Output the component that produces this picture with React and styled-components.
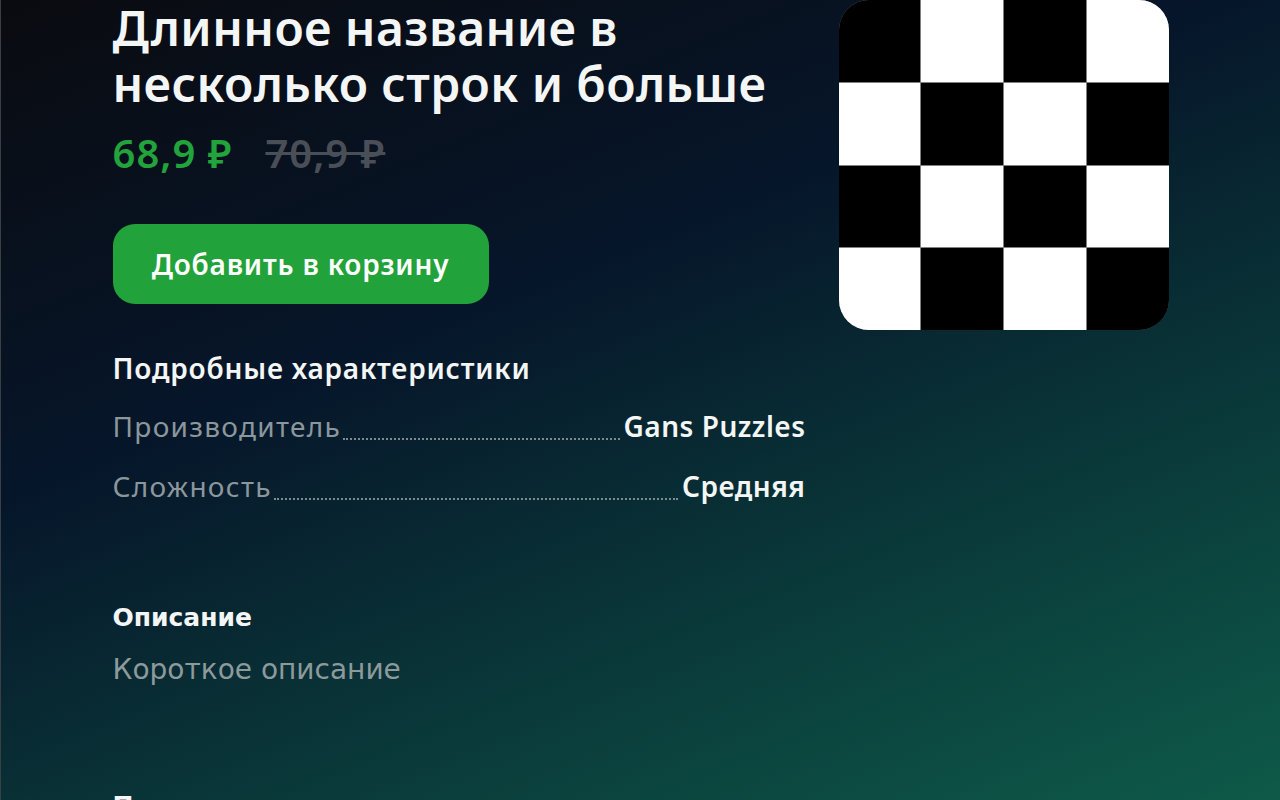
import React from "react";
import styled, { createGlobalStyle } from "styled-components";

const GlobalStyle = createGlobalStyle`
  html, body {
    margin: 0;
    padding: 0;
  }
  body {
    font-family: "Noto Sans", "Open Sans", sans-serif;
    background: #0a0b10;
  }
`;

export const Page = styled.div`
  height: 800px;
  overflow: hidden;
  border-left: 1px solid #3a3f45;
  box-sizing: border-box;
  background: linear-gradient(158deg, #0a0b10 0%, #06162a 38%, #0a3a3a 70%, #0e5a49 100%);
  color: #f4f6f6;
`;

export const Container = styled.main`
  width: 1056px;
  margin: 0 auto;
  display: grid;
  grid-template-columns: 693px 330px;
  column-gap: 33px;
  align-items: start;
`;

export const Info = styled.section`
  display: flex;
  flex-direction: column;
`;

export const Title = styled.h1`
  margin: 0;
  font-size: 48px;
  line-height: 56px;
  letter-spacing: 0.4px;
  font-weight: 600;
  color: #f4f6f6;
`;

export const PriceRow = styled.div`
  display: flex;
  align-items: center;
  gap: 33px;
  margin-top: 12px;
  height: 56px;
`;

export const Price = styled.span`
  font-size: 40px;
  letter-spacing: 1px;
  font-weight: 600;
  color: ${(props) => (props.old ? "#4a4e56" : "#22a33c")};
  text-decoration: ${(props) => (props.old ? "line-through" : "none")};
  text-decoration-thickness: 3px;
`;

export const CartButton = styled.button`
  margin-top: 44px;
  width: 376px;
  height: 80px;
  border: none;
  border-radius: 22px;
  background: #22a23a;
  color: #fff;
  font-family: "Noto Sans", sans-serif;
  font-size: 28px;
  letter-spacing: 0.8px;
  font-weight: 600;
  cursor: pointer;
`;

export const SectionTitle = styled.h2`
  margin: ${(props) => props.gap || "48px"} 0 0;
  font-size: 28px;
  letter-spacing: 0.8px;
  line-height: 36px;
  font-weight: 600;
  color: #f4f6f6;
`;

export const SpecList = styled.dl`
  margin: 22px 0 0;
  display: flex;
  flex-direction: column;
  gap: 24px;
`;

export const SpecRow = styled.div`
  display: flex;
  align-items: baseline;
  font-size: 28px;
  line-height: 36px;
`;

export const SpecName = styled.dt`
  color: #8b979c;
  letter-spacing: 1.3px;
`;

export const Leader = styled.span`
  flex: 1;
  margin: 0 4px 0 2px;
  border-bottom: 2px dotted #7d8a90;
  transform: translateY(3px);
`;

export const SpecValue = styled.dd`
  margin: 0;
  font-weight: 600;
  letter-spacing: 0.5px;
  color: #f4f6f6;
`;

export const Description = styled.p`
  margin: 16px 0 0;
  font-family: "DejaVu Sans", sans-serif;
  font-size: 28px;
  line-height: 36px;
  color: #8c9a9c;
`;

export const DescTitle = styled(SectionTitle)`
  font-family: "DejaVu Sans", sans-serif;
  font-size: 25px;
  letter-spacing: 0;
  font-weight: 700;
`;

export const Cover = styled.div`
  width: 330px;
  height: 330px;
  border-radius: 30px;
  overflow: hidden;
  display: grid;
  grid-template-columns: repeat(4, 1fr);
  grid-template-rows: repeat(4, 1fr);
  gap: 1px;
  background: #808080;
`;

export const Cell = styled.div`
  background: ${(props) => (props.dark ? "#000" : "#fff")};
`;

function Chessboard() {
  const cells = [];
  for (let r = 0; r < 4; r++) {
    for (let c = 0; c < 4; c++) {
      cells.push(<Cell key={`${r}-${c}`} dark={(r + c) % 2 === 0} />);
    }
  }
  return <Cover>{cells}</Cover>;
}

const specs = [
  { name: "Производитель", value: "Gans Puzzles" },
  { name: "Сложность", value: "Средняя" },
];

export default function App() {
  return (
    <>
      <GlobalStyle />
      <Page>
        <Container>
          <Info>
            <Title>
              Длинное название в<br />
              несколько строк и больше
            </Title>
            <PriceRow>
              <Price>68,9 ₽</Price>
              <Price old>70,9 ₽</Price>
            </PriceRow>
            <CartButton>Добавить в корзину</CartButton>
            <SectionTitle gap="46px">Подробные характеристики</SectionTitle>
            <SpecList>
              {specs.map((spec) => (
                <SpecRow key={spec.name}>
                  <SpecName>{spec.name}</SpecName>
                  <Leader />
                  <SpecValue>{spec.value}</SpecValue>
                </SpecRow>
              ))}
            </SpecList>
            <DescTitle gap="96px">Описание</DescTitle>
            <Description>Короткое описание</Description>
            <DescTitle gap="100px">Пример</DescTitle>
          </Info>
          <Chessboard />
        </Container>
      </Page>
    </>
  );
}
